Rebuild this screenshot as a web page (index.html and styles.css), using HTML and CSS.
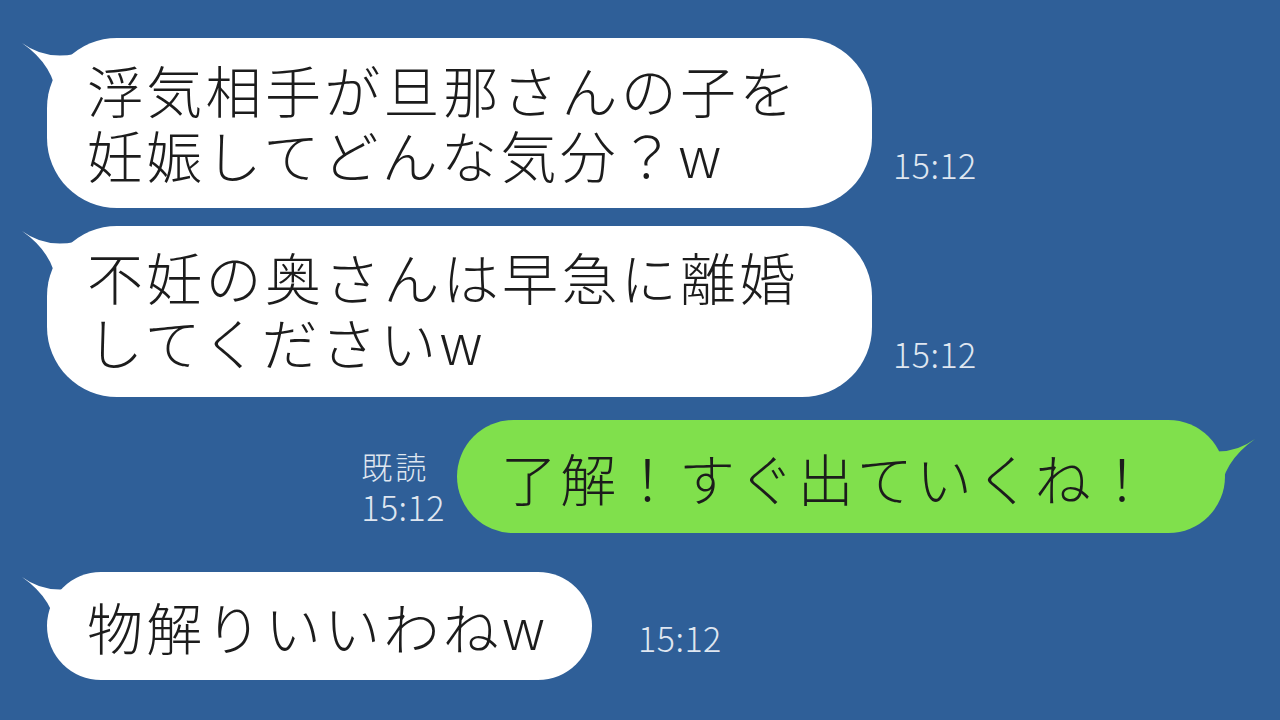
FILE: index.html
```html
<!DOCTYPE html>
<html lang="ja">
<head>
<meta charset="utf-8">
<title>chat</title>
<link rel="stylesheet" href="styles.css">
</head>
<body>
<main class="chat">
  <div class="row row-in row-1">
    <div class="bubble bubble-in b1">
      <svg class="tail tail-in" viewBox="0 0 60 60" width="60" height="60"><path d="M1 1 Q24 18 54 12 L54 58 L36 58 Q34 24 1 1 Z" fill="#ffffff"/></svg>
      <p class="msg"><span class="line">浮気相手が旦那さんの子を</span><span class="line">妊娠してどんな気分？w</span></p>
    </div>
    <span class="time">15:12</span>
  </div>
  <div class="row row-in row-2">
    <div class="bubble bubble-in b2">
      <svg class="tail tail-in" viewBox="0 0 60 60" width="60" height="60"><path d="M1 1 Q24 18 54 12 L54 58 L36 58 Q34 24 1 1 Z" fill="#ffffff"/></svg>
      <p class="msg"><span class="line">不妊の奥さんは早急に離婚</span><span class="line">してくださいw</span></p>
    </div>
    <span class="time">15:12</span>
  </div>
  <div class="row row-out">
    <div class="meta">
      <span class="read">既読</span>
      <span class="time-out">15:12</span>
    </div>
    <div class="bubble bubble-out b3">
      <svg class="tail tail-out" viewBox="0 0 60 60" width="60" height="60"><path d="M59 1 Q36 18 6 12 L6 58 L24 58 Q26 24 59 1 Z" fill="#80e04c"/></svg>
      <p class="msg"><span class="line">了解！すぐ出ていくね！</span></p>
    </div>
  </div>
  <div class="row row-in row-4">
    <div class="bubble bubble-in b4">
      <svg class="tail tail-in" viewBox="0 0 60 60" width="60" height="60"><path d="M1 1 Q24 18 54 12 L54 58 L36 58 Q34 24 1 1 Z" fill="#ffffff"/></svg>
      <p class="msg"><span class="line">物解りいいわねw</span></p>
    </div>
    <span class="time time-4">15:12</span>
  </div>
</main>
</body>
</html>
```
FILE: styles.css
```css
html, body {
  margin: 0;
  padding: 0;
}
body {
  width: 1280px;
  height: 720px;
  overflow: hidden;
  background: #2f5f98;
  font-family: "Noto Sans CJK JP Light", "Noto Sans CJK JP", "Noto Sans", sans-serif;
}
.chat {
  display: flex;
  flex-direction: column;
  padding: 38px 55px 0 47px;
}
.row {
  display: flex;
  align-items: flex-end;
}
.row-2 { margin-top: 18px; }
.row-out {
  margin-top: 23px;
  justify-content: flex-end;
}
.row-4 { margin-top: 39px; }

.bubble {
  position: relative;
  box-sizing: border-box;
  border-radius: 70px;
}
.bubble-in { background: #ffffff; }
.bubble-out { background: #80e04c; }

.msg {
  margin: 0;
  display: flex;
  flex-direction: column;
  font-size: 56px;
  font-weight: 300;
  letter-spacing: 3.3px;
  color: #1c1c1c;
  white-space: nowrap;
}
.line {
  display: block;
  height: 65px;
  line-height: 65px;
}
.b1, .b2 {
  width: 825px;
  padding: 18px 0 22px 40px;
}
.b2 { padding-top: 17px; padding-bottom: 24px; }
.b3 {
  width: 768px;
  padding: 24px 0 24px 44px;
  border-radius: 60px;
}
.b4 {
  width: 545px;
  padding: 21px 0 22px 40px;
  border-radius: 56px;
}

.tail {
  position: absolute;
  top: 4px;
  display: block;
}
.tail-in { left: -26px; }
.tail-out { right: -31px; top: 18px; }

.time {
  margin-left: 21px;
  margin-bottom: 23px;
  font-size: 34px;
  line-height: 40px;
  font-weight: 300;
  color: #dfe6f0;
  letter-spacing: 0.5px;
}
.time-4 { margin-left: 46px; margin-bottom: 22px; }

.meta {
  display: flex;
  flex-direction: column;
  margin-right: 12px;
  margin-bottom: 6px;
  color: #dfe6f0;
  font-weight: 300;
}
.read {
  font-size: 31px;
  line-height: 42px;
  letter-spacing: 3px;
}
.time-out {
  font-size: 34px;
  line-height: 40px;
  letter-spacing: 0.5px;
}
```
